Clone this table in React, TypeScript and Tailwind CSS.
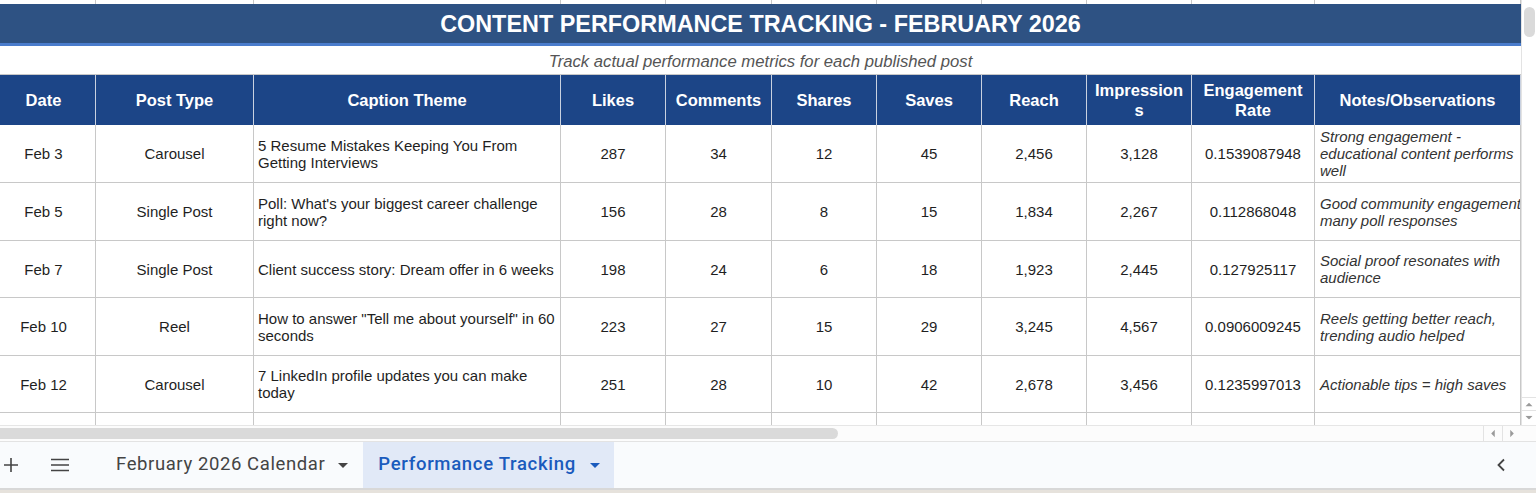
const cols = [96, 158, 307, 105, 106, 105, 105, 105, 105, 123, 206];

const headers = [
  ["Date"],
  ["Post Type"],
  ["Caption Theme"],
  ["Likes"],
  ["Comments"],
  ["Shares"],
  ["Saves"],
  ["Reach"],
  ["Impression", "s"],
  ["Engagement", "Rate"],
  ["Notes/Observations"],
];

type Row = {
  h: number;
  date: string;
  type: string;
  caption: string[];
  nums: string[];
  rate: string;
  notes: string[];
};

const rows: Row[] = [
  {
    h: 58,
    date: "Feb 3",
    type: "Carousel",
    caption: ["5 Resume Mistakes Keeping You From", "Getting Interviews"],
    nums: ["287", "34", "12", "45", "2,456", "3,128"],
    rate: "0.1539087948",
    notes: ["Strong engagement -", "educational content performs", "well"],
  },
  {
    h: 58,
    date: "Feb 5",
    type: "Single Post",
    caption: ["Poll: What's your biggest career challenge", "right now?"],
    nums: ["156", "28", "8", "15", "1,834", "2,267"],
    rate: "0.112868048",
    notes: ["Good community engagement", "many poll responses"],
  },
  {
    h: 57,
    date: "Feb 7",
    type: "Single Post",
    caption: ["Client success story: Dream offer in 6 weeks"],
    nums: ["198", "24", "6", "18", "1,923", "2,445"],
    rate: "0.127925117",
    notes: ["Social proof resonates with", "audience"],
  },
  {
    h: 58,
    date: "Feb 10",
    type: "Reel",
    caption: ['How to answer "Tell me about yourself" in 60', "seconds"],
    nums: ["223", "27", "15", "29", "3,245", "4,567"],
    rate: "0.0906009245",
    notes: ["Reels getting better reach,", "trending audio helped"],
  },
  {
    h: 57,
    date: "Feb 12",
    type: "Carousel",
    caption: ["7 LinkedIn profile updates you can make", "today"],
    nums: ["251", "28", "10", "42", "2,678", "3,456"],
    rate: "0.1235997013",
    notes: ["Actionable tips = high saves"],
  },
];

function Lines({ lines }: { lines: string[] }) {
  return (
    <div className="flex flex-col">
      {lines.map((l, i) => (
        <span key={i} className="whitespace-nowrap">
          {l}
        </span>
      ))}
    </div>
  );
}

function GridStrip({ h }: { h: number }) {
  return (
    <div className="flex" style={{ height: h }}>
      {cols.map((w, i) => (
        <div
          key={i}
          className="shrink-0 border-r border-[#c8c8c8] bg-white"
          style={{ width: w }}
        />
      ))}
    </div>
  );
}

function DataRow({ row }: { row: Row }) {
  const cell = "shrink-0 flex items-center border-r border-b border-[#c8c8c8] overflow-hidden";
  return (
    <div className="flex text-[15px] leading-[17px] text-[#1f1f1f]" style={{ height: row.h }}>
      <div className={`${cell} justify-center pr-[8px]`} style={{ width: cols[0] }}>
        {row.date}
      </div>
      <div className={`${cell} justify-center`} style={{ width: cols[1] }}>
        {row.type}
      </div>
      <div className={`${cell} px-[4px]`} style={{ width: cols[2] }}>
        <Lines lines={row.caption} />
      </div>
      {row.nums.map((n, i) => (
        <div key={i} className={`${cell} justify-center`} style={{ width: cols[i + 3] }}>
          {n}
        </div>
      ))}
      <div className={`${cell} justify-center`} style={{ width: cols[9] }}>
        {row.rate}
      </div>
      <div className={`${cell} pl-[5px] italic text-[#333]`} style={{ width: cols[10] }}>
        <Lines lines={row.notes} />
      </div>
    </div>
  );
}

function Caret({ className }: { className: string }) {
  return (
    <svg width="10" height="5" viewBox="0 0 10 5" className={className}>
      <path d="M0 0h10L5 5z" fill="currentColor" />
    </svg>
  );
}

export default function App() {
  return (
    <div className="flex h-[493px] w-[1536px] flex-col overflow-hidden bg-white font-['Liberation_Sans',Arial,sans-serif]">
      <div className="flex h-[425px]">
        <div className="flex w-[1521px] flex-col">
          <GridStrip h={4} />
          <div className="flex h-[42px] items-center justify-center border-b-[3px] border-[#4a7ccc] bg-[#2e5283] pt-[3px] text-[23.4px] font-bold text-white">
            CONTENT PERFORMANCE TRACKING - FEBRUARY 2026
          </div>
          <div className="flex h-[29px] items-center justify-center border-b border-[#c8c8c8] pt-[3px] text-[16.7px] italic text-[#555]">
            Track actual performance metrics for each published post
          </div>
          <div className="flex h-[50px] bg-[#1c4587] text-[16.5px] font-bold leading-[20px] text-white">
            {headers.map((h, i) => (
              <div
                key={i}
                className={`flex shrink-0 flex-col items-center justify-center border-r border-[#c9d1e0] text-center ${i === 0 ? "pr-[8px]" : ""}`}
                style={{ width: cols[i] }}
              >
                {h.map((t) => (
                  <span key={t}>{t}</span>
                ))}
              </div>
            ))}
          </div>
          {rows.map((r) => (
            <DataRow key={r.date} row={r} />
          ))}
          <GridStrip h={12} />
        </div>
        <div className="relative flex w-[15px] flex-col border-l border-[#e3e3e3] bg-white">
          <div className="mx-auto mt-[7px] h-[30px] w-[11px] rounded-full bg-[#dadada]" />
          <div className="mt-auto flex h-[13px] items-center justify-center border-t border-[#e3e3e3] text-[#9a9a9a]">
            <Caret className="rotate-180 scale-75" />
          </div>
          <div className="mb-[2px] flex h-[13px] items-center justify-center border-t border-[#e3e3e3] text-[#9a9a9a]">
            <Caret className="scale-75" />
          </div>
        </div>
      </div>
      <div className="flex h-[16px] items-center border-t border-[#e6e6e6] bg-[#fcfcfc]">
        <div className="h-[11px] w-[838px] rounded-r-full bg-[#dadada]" />
        <div className="ml-auto mr-[15px] flex h-full">
          <div className="flex w-[19px] items-center justify-center border-l border-[#e3e3e3] text-[#9a9a9a]">
            <Caret className="rotate-90 scale-75" />
          </div>
          <div className="flex w-[19px] items-center justify-center border-l border-[#e3e3e3] text-[#9a9a9a]">
            <Caret className="-rotate-90 scale-75" />
          </div>
        </div>
      </div>
      <div className="flex h-[47px] items-center border-t border-[#e3e3e3] bg-[#f9fbfd] font-['Roboto',sans-serif] text-[#444]">
        <svg width="14" height="14" viewBox="0 0 14 14" className="ml-[4px]">
          <path d="M7 0v14M0 7h14" stroke="#444" strokeWidth="1.6" />
        </svg>
        <svg width="18" height="14" viewBox="0 0 18 14" className="ml-[33px]">
          <path d="M0 1.5h18M0 7h18M0 12.5h18" stroke="#444" strokeWidth="1.6" />
        </svg>
        <div className="ml-[47px] flex items-center text-[18.5px] tracking-[0.6px]">
          February 2026 Calendar
          <Caret className="ml-[13px]" />
        </div>
        <div className="ml-[15px] flex h-full items-center bg-[#e1e9f7] pl-[15px] pr-[14px] text-[18.5px] font-medium tracking-[0.7px] text-[#1a5bbd]">
          Performance Tracking
          <Caret className="ml-[14px]" />
        </div>
        <svg width="10" height="14" viewBox="0 0 10 14" className="ml-auto mr-[30px]">
          <path d="M8 1.5 2.5 7 8 12.5" stroke="#444" strokeWidth="1.8" fill="none" />
        </svg>
      </div>
      <div className="flex-1 border-t-2 border-[#d8d8d8] bg-[#e6e2dc]" />
    </div>
  );
}
